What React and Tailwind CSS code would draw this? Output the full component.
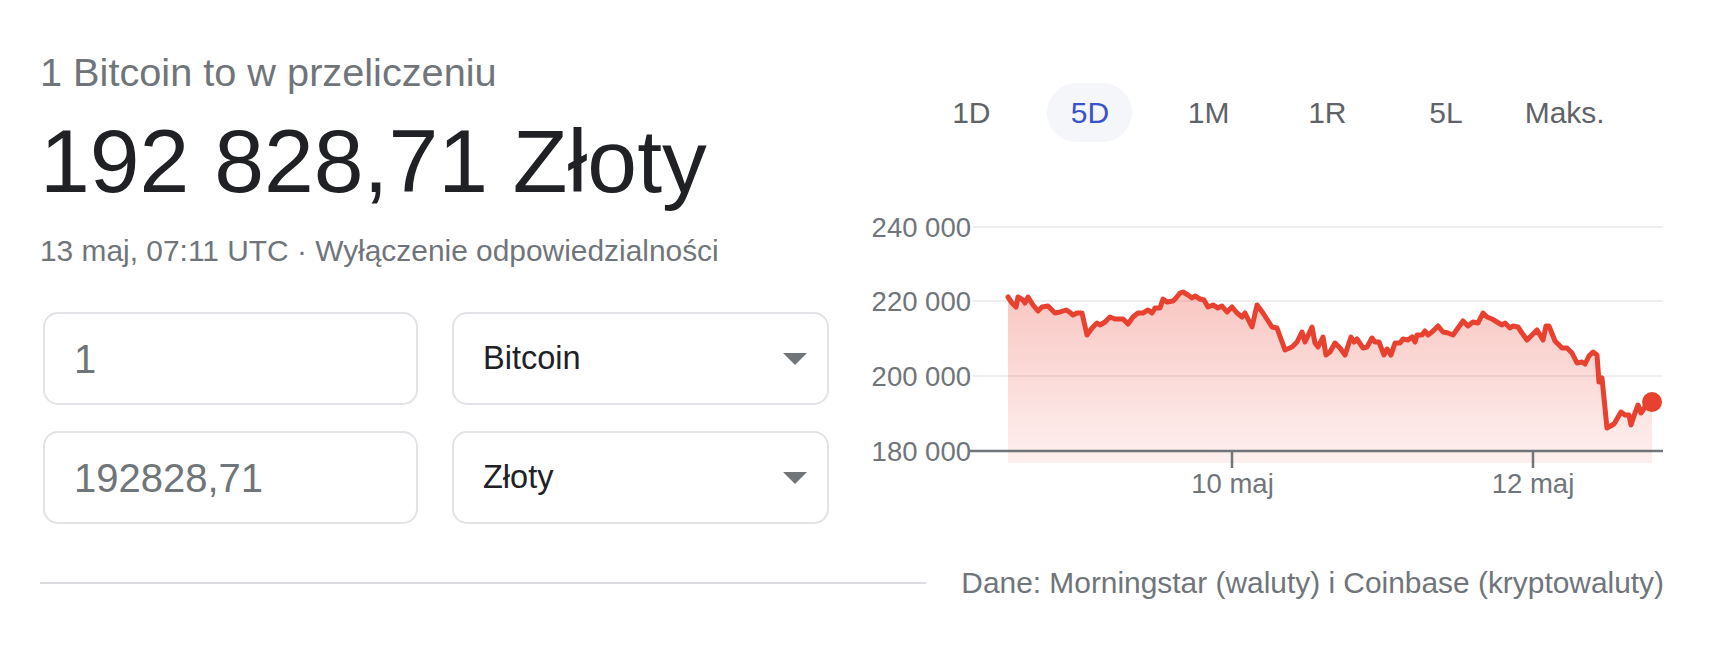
import React from "react";

const ranges = ["1D", "5D", "1M", "1R", "5L", "Maks."];

// traced points in page coordinates (chart svg sits at 852,200)
const raw = [
  [1008, 297], [1012, 303], [1016, 307], [1018, 297], [1023, 300], [1025, 303], [1028, 297],
  [1033, 305], [1038, 311], [1042, 307], [1048, 306], [1055, 313], [1060, 312], [1066, 310],
  [1068, 311], [1073, 315], [1077, 313], [1082, 313], [1087, 335], [1092, 328], [1097, 323],
  [1100, 325], [1105, 322], [1110, 317], [1115, 319], [1123, 319], [1128, 324], [1133, 317],
  [1138, 313], [1143, 313], [1148, 310], [1152, 313], [1155, 308], [1160, 308], [1163, 299],
  [1167, 302], [1173, 301], [1176, 298], [1180, 293], [1183, 292], [1188, 295], [1192, 298],
  [1195, 296], [1200, 299], [1204, 300], [1208, 307], [1213, 305], [1218, 308], [1222, 306],
  [1227, 312], [1232, 307], [1237, 313], [1242, 317], [1245, 313], [1252, 327], [1257, 305],
  [1263, 313], [1272, 327], [1277, 328], [1285, 350], [1292, 347], [1297, 342], [1302, 332],
  [1305, 342], [1312, 327], [1315, 343], [1318, 347], [1323, 337], [1326, 355], [1330, 352],
  [1335, 343], [1340, 348], [1345, 355], [1351, 337], [1354, 342], [1357, 339], [1363, 348],
  [1367, 347], [1372, 338], [1375, 342], [1379, 342], [1384, 355], [1387, 349], [1391, 355],
  [1395, 343], [1400, 343], [1403, 339], [1408, 340], [1412, 337], [1415, 342], [1417, 335],
  [1422, 335], [1425, 331], [1428, 335], [1432, 332], [1438, 326], [1443, 332], [1448, 333],
  [1453, 335], [1458, 328], [1463, 321], [1468, 326], [1473, 322], [1478, 323], [1483, 313],
  [1487, 317], [1492, 319], [1497, 322], [1502, 325], [1505, 323], [1510, 328], [1513, 326],
  [1518, 327], [1522, 333], [1527, 340], [1532, 335], [1537, 330], [1540, 335], [1543, 340],
  [1546, 326], [1549, 326], [1555, 341], [1562, 348], [1567, 348], [1572, 353], [1577, 363],
  [1582, 362], [1585, 364], [1589, 356], [1593, 352], [1597, 355], [1599, 382], [1602, 378],
  [1607, 428], [1614, 424], [1621, 412], [1625, 415], [1629, 415], [1631, 425], [1635, 413],
  [1638, 405], [1641, 413], [1645, 407], [1652, 402],
];

const pts = raw.map(([x, y]) => [x - 852, y - 200]);
const linePath = pts.map(([x, y], i) => `${i ? "L" : "M"}${x} ${y}`).join(" ");
const first = pts[0];
const last = pts[pts.length - 1];
const areaPath = `${linePath} L${last[0]} 263 L${first[0]} 263 Z`;

function Chart() {
  const grid = [
    { y: 27, label: "240 000" },
    { y: 101, label: "220 000" },
    { y: 176, label: "200 000" },
  ];
  return (
    <svg width="812" height="310" viewBox="0 0 812 310" className="block">
      <defs>
        <linearGradient id="fill" x1="0" y1="0" x2="0" y2="1">
          <stop offset="0%" stopColor="#ea4335" stopOpacity="0.3" />
          <stop offset="100%" stopColor="#ea4335" stopOpacity="0.08" />
        </linearGradient>
      </defs>
      {grid.map((g) => (
        <g key={g.label}>
          <line x1="121" x2="811" y1={g.y} y2={g.y} stroke="#eeeeee" strokeWidth="2" />
          <text x="119" y={g.y + 10} textAnchor="end" fontSize="27.5" fill="#70757a">
            {g.label}
          </text>
        </g>
      ))}
      <path d={areaPath} fill="url(#fill)" />
      <line x1="118" x2="811" y1="251" y2="251" stroke="#70757a" strokeWidth="2.5" />
      <text x="119" y="261" textAnchor="end" fontSize="27.5" fill="#70757a">
        180 000
      </text>
      <line x1="380" x2="380" y1="251" y2="268" stroke="#70757a" strokeWidth="2.5" />
      <line x1="681" x2="681" y1="251" y2="268" stroke="#70757a" strokeWidth="2.5" />
      <text x="380.5" y="293" textAnchor="middle" fontSize="27.5" fill="#70757a">
        10 maj
      </text>
      <text x="681" y="293" textAnchor="middle" fontSize="27.5" fill="#70757a">
        12 maj
      </text>
      <path
        d={linePath}
        fill="none"
        stroke="#e8412f"
        strokeWidth="5"
        strokeLinejoin="round"
        strokeLinecap="round"
      />
      <circle cx={last[0]} cy={last[1]} r="10" fill="#e8412f" />
    </svg>
  );
}

function Field({ children }) {
  return (
    <div className="flex h-[93px] items-center rounded-[15px] border-2 border-[#e1e3e6] bg-white pl-[29px] text-[40px] text-[#70757a]">
      {children}
    </div>
  );
}

function Select({ children }) {
  return (
    <div className="flex h-[93px] items-center justify-between rounded-[15px] border-2 border-[#e1e3e6] bg-white pl-[29px] pr-[20px] text-[32.5px] text-[#202124]">
      <span>{children}</span>
      <span className="h-0 w-0 border-l-[12px] border-r-[12px] border-t-[12px] border-l-transparent border-r-transparent border-t-[#70757a]" />
    </div>
  );
}

export default function App() {
  return (
    <div className="h-[653px] w-[1720px] bg-white font-['Liberation_Sans',Arial,sans-serif]">
      <div className="flex h-[524px]">
        <div className="w-[852px] pl-[40px] pt-[48px]">
          <div className="text-[39.7px] leading-[48px] text-[#70757a]">1 Bitcoin to w przeliczeniu</div>
          <div className="mt-[15px] text-[89.5px] leading-[100px] text-[#202124]">192 828,71 Złoty</div>
          <div className="mt-[22px] text-[29.9px] leading-[36px] text-[#70757a]">
            13 maj, 07:11 UTC · Wyłączenie odpowiedzialności
          </div>
          <div className="ml-[3px] mt-[43px] grid w-[786px] grid-cols-[375px_377px] gap-x-[34px] gap-y-[26px]">
            <Field>1</Field>
            <Select>Bitcoin</Select>
            <Field>192828,71</Field>
            <Select>Złoty</Select>
          </div>
        </div>
        <div className="w-[812px] pt-[83px]">
          <div className="ml-[60px] grid w-[712px] grid-cols-6">
            {ranges.map((r) => (
              <div key={r} className="flex justify-center">
                <div
                  className={
                    r === "5D"
                      ? "flex h-[59px] w-[85px] items-center justify-center rounded-full bg-[#f4f6fa] text-[30px] text-[#3b53c8]"
                      : "flex h-[59px] w-[85px] items-center justify-center text-[30px] text-[#5f6368]"
                  }
                >
                  {r}
                </div>
              </div>
            ))}
          </div>
          <div className="mt-[58px]">
            <Chart />
          </div>
        </div>
      </div>
      <div className="mt-[41px] flex items-center pl-[40px] pr-[56px]">
        <div className="h-[2px] flex-1 bg-[#dadce0]" />
        <div className="ml-[35px] text-[29.9px] leading-[36px] text-[#70757a]">
          Dane: Morningstar (waluty) i Coinbase (kryptowaluty)
        </div>
      </div>
    </div>
  );
}
